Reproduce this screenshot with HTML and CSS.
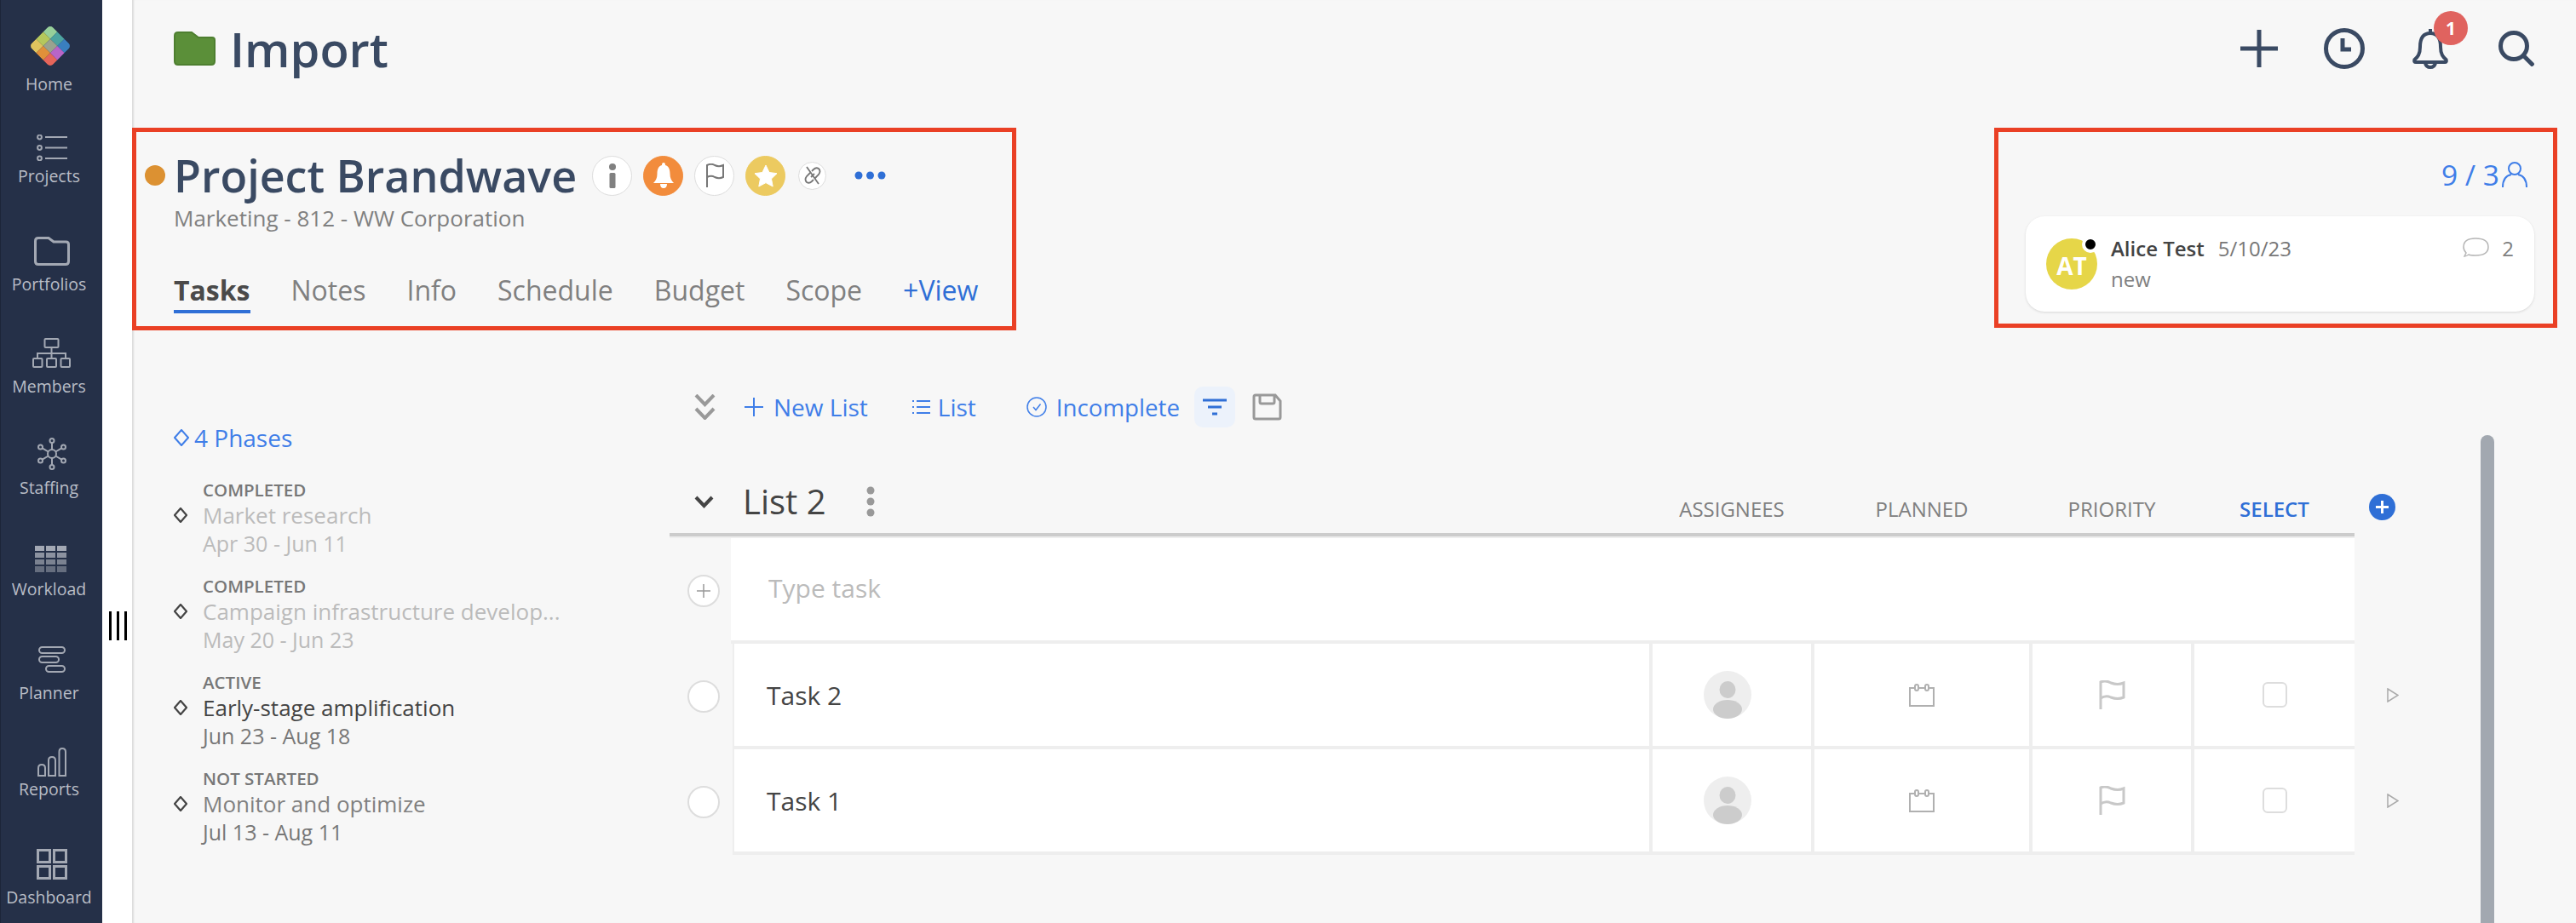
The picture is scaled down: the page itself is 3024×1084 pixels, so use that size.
FILE: index.html
```html
<!DOCTYPE html>
<html lang="en">
<head>
<meta charset="utf-8">
<title>Project Brandwave</title>
<link rel="stylesheet" href="styles.css">
</head>
<body>
<div class="app">
  <nav class="sidebar">
    <a class="nav-item gap-8 nudge">
      <svg width="50" height="50" viewBox="0 0 50 50"><defs><clipPath id="lg"><rect x="-17.7" y="-17.7" width="35.4" height="35.4" rx="5"/></clipPath></defs>
        <g transform="translate(25 25) rotate(45)" clip-path="url(#lg)">
          <rect x="-17.7" y="-17.7" width="11.8" height="11.8" fill="#97cf9a"/><rect x="-5.9" y="-17.7" width="11.8" height="11.8" fill="#4da3a0"/><rect x="5.9" y="-17.7" width="11.8" height="11.8" fill="#3a7fbf"/>
          <rect x="-17.7" y="-5.9" width="11.8" height="11.8" fill="#b5c85c"/><rect x="-5.9" y="-5.9" width="11.8" height="11.8" fill="#9aa38f"/><rect x="5.9" y="-5.9" width="11.8" height="11.8" fill="#b865c8"/>
          <rect x="-17.7" y="5.9" width="11.8" height="11.8" fill="#e0c45e"/><rect x="-5.9" y="5.9" width="11.8" height="11.8" fill="#e0903a"/><rect x="5.9" y="5.9" width="11.8" height="11.8" fill="#e6655a"/>
        </g></svg>
      <span class="nav-label">Home</span>
    </a>
    <a class="nav-item gap-6">
      <svg class="nav-icon" width="36" height="31" viewBox="0 0 36 31"><circle cx="3.5" cy="3" r="2.4"/><circle cx="3.5" cy="15.5" r="2.4"/><circle cx="3.5" cy="28" r="2.4"/><path d="M10 3H36M10 15.5H36M10 28H36"/></svg>
      <span class="nav-label">Projects</span>
    </a>
    <a class="nav-item gap-10">
      <svg class="nav-icon thick" width="42" height="34" viewBox="0 0 42 34"><path d="M1.5 5Q1.5 1.5 5 1.5H17L23 6H37.5Q40.5 6 40.5 9V29Q40.5 32.5 37 32.5H5Q1.5 32.5 1.5 29Z"/></svg>
      <span class="nav-label">Portfolios</span>
    </a>
    <a class="nav-item gap-10">
      <svg class="nav-icon" width="45" height="35" viewBox="0 0 45 35"><rect x="14.5" y="1" width="16" height="10" rx="1"/><rect x="1" y="24" width="10.5" height="10" rx="1"/><rect x="17" y="24" width="11" height="10" rx="1"/><rect x="33.5" y="24" width="10.5" height="10" rx="1"/><path d="M22.5 11V24M6 24V18H39V24"/></svg>
      <span class="nav-label">Members</span>
    </a>
    <a class="nav-item gap-9">
      <svg class="nav-icon" width="34" height="38" viewBox="0 0 34 38"><circle cx="17" cy="19" r="5"/><circle cx="17" cy="3.5" r="2.5"/><circle cx="17" cy="34.5" r="2.5"/><circle cx="3.5" cy="11" r="2.5"/><circle cx="30.5" cy="11" r="2.5"/><circle cx="3.5" cy="27" r="2.5"/><circle cx="30.5" cy="27" r="2.5"/><path d="M17 6V14M17 24V32M5.7 12.3L12.7 16.5M28.3 12.3L21.3 16.5M5.7 25.7L12.7 21.5M28.3 25.7L21.3 21.5"/></svg>
      <span class="nav-label">Staffing</span>
    </a>
    <a class="nav-item gap-8 nudge">
      <svg width="37" height="31" viewBox="0 0 37 31">
        <g fill="#a3a8b4"><rect width="11" height="6"/><rect x="13" width="11" height="6"/><rect x="26" width="11" height="6"/></g>
        <g fill="#8c92a0"><rect y="8" width="11" height="6"/><rect x="13" y="8" width="11" height="6"/><rect x="26" y="8" width="11" height="6"/></g>
        <g fill="#7b8291"><rect y="16" width="11" height="6"/><rect x="13" y="16" width="11" height="6"/><rect x="26" y="16" width="11" height="6"/></g>
        <g fill="#666e7f"><rect y="24" width="11" height="7"/><rect x="13" y="24" width="11" height="7"/><rect x="26" y="24" width="11" height="7"/></g></svg>
      <span class="nav-label">Workload</span>
    </a>
    <a class="nav-item gap-12">
      <svg class="nav-icon" width="32" height="31" viewBox="0 0 32 31"><rect x="1" y="1" width="30" height="7" rx="3.5"/><rect x="1" y="12" width="23" height="7" rx="3.5"/><rect x="9" y="23" width="22" height="7" rx="3.5"/></svg>
      <span class="nav-label">Planner</span>
    </a>
    <a class="nav-item gap-3">
      <svg class="nav-icon" width="34" height="34" viewBox="0 0 34 34"><path d="M1 33V24Q1 20 5 20Q9 20 9 24V33ZM13 33V15Q13 11 17 11Q21 11 21 15V33ZM25.5 33V5Q25.5 1 29 1Q33 1 33 5V33Z"/></svg>
      <span class="nav-label">Reports</span>
    </a>
    <a class="nav-item gap-9">
      <svg class="nav-icon thick" width="36" height="36" viewBox="0 0 36 36"><rect x="1.5" y="1.5" width="14" height="14"/><rect x="20.5" y="1.5" width="14" height="14"/><rect x="1.5" y="20.5" width="14" height="14"/><rect x="20.5" y="20.5" width="14" height="14"/></svg>
      <span class="nav-label">Dashboard</span>
    </a>
  </nav>

  <div class="gutter"><div class="grip"><i></i><i></i><i></i></div></div>

  <main class="main">
    <header class="topbar">
      <div class="crumb">
        <svg width="49" height="40" viewBox="0 0 49 40"><path d="M1 5Q1 1 5 1H21L29 7H45Q48 7 48 10V35Q48 39 44 39H5Q1 39 1 35Z" fill="#5b8f39" stroke="#4e7f30" stroke-width="2"/></svg>
        <h1 class="crumb-title">Import</h1>
      </div>
      <div class="top-actions">
        <svg class="top-icon" width="44" height="44" viewBox="0 0 44 44"><path d="M22 0V44M0 22H44"/></svg>
        <svg class="top-icon" width="48" height="48" viewBox="0 0 48 48"><circle cx="24" cy="24" r="21.5"/><path d="M22 12V25H32"/></svg>
        <div class="bell-wrap">
          <svg class="top-icon thin" width="42" height="48" viewBox="0 0 42 48"><path d="M21 1V6M21 6C11 6 9 14 9 22C9 31 6 34 2.500 37Q1.500 40 4 40H38Q40.500 40 39.500 37C36 34 33 31 33 22C33 14 31 6 21 6ZM15 41Q16 46 21 46Q26 46 27 41"/></svg>
          <span class="badge">1</span>
        </div>
        <svg class="top-icon" width="42" height="42" viewBox="0 0 42 42"><circle cx="18" cy="18" r="15.500"/><path d="M29 29L41 41"/></svg>
      </div>
    </header>

    <section class="project-row">
      <div class="red-box project-box">
        <div class="title-row">
          <span class="status-dot"></span>
          <h2 class="project-title">Project Brandwave</h2>
          <div class="title-actions">
            <span class="round"><svg width="14" height="30" viewBox="0 0 14 30"><circle cx="7" cy="5" r="4" fill="#808080"/><rect x="3.500" y="12" width="7" height="18" rx="1.500" fill="#808080"/></svg></span>
            <span class="round round-orange"><svg width="24" height="30" viewBox="0 0 24 30"><path d="M12 0C13.500 0 14 1 14 3C18 4 19.500 8 19.500 13C19.500 18 21 21 24 24H0C3 21 4.500 18 4.500 13C4.500 8 6 4 10 3C10 1 10.500 0 12 0ZM8 25H16Q16 30 12 30Q8 30 8 25Z" fill="#fff"/></svg></span>
            <span class="round"><svg width="24" height="28" viewBox="0 0 24 28" fill="none" stroke="#777" stroke-width="2"><path d="M3 28V2Q8 -0.500 12 2Q17 4.500 22 2V16Q17 18.500 12 16Q8 13.500 3 16"/></svg></span>
            <span class="round round-yellow"><svg width="28" height="27" viewBox="0 0 28 27"><path d="M14 1L18 9.500L27 10.700L20.500 17L22.200 26L14 21.600L5.800 26L7.500 17L1 10.700L10 9.500Z" fill="#fff" stroke="#fff" stroke-linejoin="round"/></svg></span>
            <span class="round round-small"><svg width="20" height="22" viewBox="0 0 20 22" fill="none" stroke="#777" stroke-width="1.800"><path d="M7 8L3 12Q0 16 3 19Q6 21 9 18L11 16M13 14L17 10Q20 6 17 3Q14 1 11 4L9 6M8 13L12 9M3 1L17 21"/></svg></span>
            <svg class="more" width="37" height="10" viewBox="0 0 37 10"><circle cx="5" cy="5" r="4.500"/><circle cx="18.500" cy="5" r="4.500"/><circle cx="32" cy="5" r="4.500"/></svg>
          </div>
        </div>
        <p class="project-sub">Marketing - 812 - WW Corporation</p>
        <div class="tabs">
          <span class="tab tab-active">Tasks</span>
          <span class="tab">Notes</span>
          <span class="tab">Info</span>
          <span class="tab">Schedule</span>
          <span class="tab">Budget</span>
          <span class="tab">Scope</span>
          <span class="tab tab-add">+View</span>
        </div>
      </div>

      <div class="red-box activity-box">
        <div class="count">
          <span>9 / 3</span>
          <svg width="30" height="30" viewBox="0 0 30 30" fill="none" stroke="#3f7ee8" stroke-width="2"><circle cx="15" cy="8" r="7"/><path d="M1 30Q1 17 11 15M29 30Q29 17 19 15"/></svg>
        </div>
        <div class="note-card">
          <div class="avatar">AT<span class="presence"></span></div>
          <div class="note-body">
            <div class="note-head">
              <span class="note-name">Alice Test</span>
              <span class="note-date">5/10/23</span>
              <svg class="note-bubble" width="31" height="24" viewBox="0 0 31 24" fill="none" stroke="#b5b5b5" stroke-width="1.500"><path d="M2 22L4 18Q1 15 1 11Q1 1 15 1Q30 1 30 11Q30 21 15 21Q9 21 7 20Q4 22 2 22Z"/></svg>
              <span class="note-count">2</span>
            </div>
            <div class="note-text">new</div>
          </div>
        </div>
      </div>
    </section>

    <section class="content">
      <aside class="phases">
        <div class="phases-title">
          <svg width="18" height="20" viewBox="0 0 18 20" fill="none" stroke="#3f7ee8" stroke-width="2"><path d="M9 1L17 10L9 19L1 10Z" stroke-linejoin="round"/></svg>
          <span>4 Phases</span>
        </div>
        <div class="phase phase-done">
          <svg class="phase-mark" width="16" height="18" viewBox="0 0 16 18"><path d="M8 1L15 9L8 17L1 9Z"/></svg>
          <span class="phase-status">COMPLETED</span>
          <span class="phase-name">Market research</span>
          <span class="phase-date">Apr 30 - Jun 11</span>
        </div>
        <div class="phase phase-done">
          <svg class="phase-mark" width="16" height="18" viewBox="0 0 16 18"><path d="M8 1L15 9L8 17L1 9Z"/></svg>
          <span class="phase-status">COMPLETED</span>
          <span class="phase-name">Campaign infrastructure develop...</span>
          <span class="phase-date">May 20 - Jun 23</span>
        </div>
        <div class="phase phase-active">
          <svg class="phase-mark" width="16" height="18" viewBox="0 0 16 18"><path d="M8 1L15 9L8 17L1 9Z"/></svg>
          <span class="phase-status">ACTIVE</span>
          <span class="phase-name">Early-stage amplification</span>
          <span class="phase-date">Jun 23 - Aug 18</span>
        </div>
        <div class="phase phase-next">
          <svg class="phase-mark" width="16" height="18" viewBox="0 0 16 18"><path d="M8 1L15 9L8 17L1 9Z"/></svg>
          <span class="phase-status">NOT STARTED</span>
          <span class="phase-name">Monitor and optimize</span>
          <span class="phase-date">Jul 13 - Aug 11</span>
        </div>
      </aside>

      <div class="tasks">
        <div class="toolbar">
          <svg class="tool-chev" width="25" height="30" viewBox="0 0 25 30" fill="none" stroke="#999" stroke-width="4"><path d="M2 1L12.500 12L23 1M2 17L12.500 28L23 17"/></svg>
          <span class="tool tool-new"><svg width="22" height="22" viewBox="0 0 22 22" stroke="#3f7ee8" stroke-width="2"><path d="M11 0V22M0 11H22"/></svg>New List</span>
          <span class="tool tool-list"><svg width="21" height="18" viewBox="0 0 21 18" stroke="#3f7ee8" stroke-width="2"><path d="M5 2H21M5 9H21M5 16H21M0 2H2M0 9H2M0 16H2"/></svg>List</span>
          <span class="tool tool-inc"><svg width="24" height="24" viewBox="0 0 24 24" fill="none" stroke="#3f7ee8" stroke-width="1.500"><circle cx="12" cy="12" r="11"/><path d="M8 12L11 15.500L16.500 8.500"/></svg>Incomplete</span>
          <span class="filter-btn"><svg width="28" height="20" viewBox="0 0 28 20" stroke="#2f6fd6" stroke-width="3"><path d="M0 2H28M6 10H22M11 18H17"/></svg></span>
          <svg class="tool-save" width="35" height="32" viewBox="0 0 35 32" fill="none" stroke="#999" stroke-width="3"><path d="M2 4Q2 2 4 2H27L33 9V28Q33 30 31 30H4Q2 30 2 28ZM9 2V10Q9 12 11 12H24Q26 12 26 10V2"/></svg>
        </div>

        <div class="list-head">
          <div class="list-name">
            <svg width="23" height="15" viewBox="0 0 23 15" fill="none" stroke="#444" stroke-width="4"><path d="M2 2L11.500 12L21 2"/></svg>
            <span>List 2</span>
            <svg class="kebab" width="10" height="36" viewBox="0 0 10 36" fill="#999"><circle cx="5" cy="5" r="4.500"/><circle cx="5" cy="18" r="4.500"/><circle cx="5" cy="31" r="4.500"/></svg>
          </div>
          <div class="col-heads">
            <span></span>
            <span>ASSIGNEES</span>
            <span>PLANNED</span>
            <span>PRIORITY</span>
            <span class="col-select">SELECT</span>
          </div>
          <svg class="col-add" width="31" height="31" viewBox="0 0 31 31"><circle cx="15.500" cy="15.500" r="15.500" fill="#2f6fd6"/><path d="M15.500 8V23M8 15.500H23" stroke="#fff" stroke-width="3"/></svg>
        </div>

        <div class="list-rule"></div>

        <div class="new-row">
          <span class="circle"><svg width="16" height="16" viewBox="0 0 16 16" stroke="#999" stroke-width="1.500"><path d="M8 0V16M0 8H16"/></svg></span>
          <div class="new-cell">Type task</div>
        </div>

        <div class="task-row">
          <span class="circle"></span>
          <div class="cells">
            <div class="cell cell-name">Task 2</div>
            <div class="cell"><svg class="assignee" width="56" height="56" viewBox="0 0 56 56"><circle cx="28" cy="28" r="28" fill="#eee"/><ellipse cx="28" cy="22" rx="9.500" ry="10" fill="#ccc"/><ellipse cx="28" cy="45" rx="17" ry="11" fill="#ccc"/></svg></div>
            <div class="cell"><svg width="30" height="27" viewBox="0 0 30 27" fill="none" stroke="#b0b0b0" stroke-width="2"><path d="M1 5H29V26H1Z"/><rect x="7" y="1" width="4" height="7" rx="2" fill="#fff"/><rect x="19" y="1" width="4" height="7" rx="2" fill="#fff"/></svg></div>
            <div class="cell"><svg width="31" height="34" viewBox="0 0 31 34" fill="none" stroke="#c8c8c8" stroke-width="3"><path d="M2 34V2Q8 -0.500 14 3Q22 6 29 3V20Q22 23 14 20Q8 17 2 21"/></svg></div>
            <div class="cell"><span class="checkbox"></span></div>
          </div>
          <svg class="row-arrow" width="14" height="17" viewBox="0 0 14 17" fill="none" stroke="#aaa" stroke-width="1.500"><path d="M1 1L13 8.500L1 16Z"/></svg>
        </div>

        <div class="task-row">
          <span class="circle"></span>
          <div class="cells">
            <div class="cell cell-name">Task 1</div>
            <div class="cell"><svg class="assignee" width="56" height="56" viewBox="0 0 56 56"><circle cx="28" cy="28" r="28" fill="#eee"/><ellipse cx="28" cy="22" rx="9.500" ry="10" fill="#ccc"/><ellipse cx="28" cy="45" rx="17" ry="11" fill="#ccc"/></svg></div>
            <div class="cell"><svg width="30" height="27" viewBox="0 0 30 27" fill="none" stroke="#b0b0b0" stroke-width="2"><path d="M1 5H29V26H1Z"/><rect x="7" y="1" width="4" height="7" rx="2" fill="#fff"/><rect x="19" y="1" width="4" height="7" rx="2" fill="#fff"/></svg></div>
            <div class="cell"><svg width="31" height="34" viewBox="0 0 31 34" fill="none" stroke="#c8c8c8" stroke-width="3"><path d="M2 34V2Q8 -0.500 14 3Q22 6 29 3V20Q22 23 14 20Q8 17 2 21"/></svg></div>
            <div class="cell"><span class="checkbox"></span></div>
          </div>
          <svg class="row-arrow" width="14" height="17" viewBox="0 0 14 17" fill="none" stroke="#aaa" stroke-width="1.500"><path d="M1 1L13 8.500L1 16Z"/></svg>
        </div>
      </div>

      <div class="scrollbar"></div>
    </section>
  </main>
</div>
</body>
</html>
```
FILE: styles.css
```css
* { box-sizing: border-box; }
html, body { margin: 0; height: 100%; }
body { background: #fff; font-family: "Open Sans", "Liberation Sans", sans-serif; color: #444; overflow: hidden; }
h1, h2, p { margin: 0; font-weight: inherit; }
svg { display: block; flex: none; }

.app { display: flex; width: 3024px; height: 1084px; overflow: hidden; }

/* sidebar */
.sidebar { width: 120px; flex: none; background: #253048; border-left: 1px solid #1c2539; display: grid; grid-template-rows: 111px 108px 127px 120px 119px 119px 122px 113px 127px; }
.nav-item { display: flex; flex-direction: column; align-items: center; justify-content: flex-end; }
.nav-label { font-size: 19.500px; line-height: 24px; color: #b9bdc6; margin-left: -6px; white-space: nowrap; }
.nav-icon { fill: none; stroke: #a3a8b3; stroke-width: 2; }
.nav-icon.thick { stroke-width: 3; }
.nudge svg { margin-right: 3px; }
.gap-3 svg { margin-bottom: 3px; }
.gap-6 svg { margin-bottom: 6px; }
.gap-8 svg { margin-bottom: 8px; }
.gap-9 svg { margin-bottom: 9px; }
.gap-10 svg { margin-bottom: 10px; }
.gap-12 svg { margin-bottom: 12px; }

/* resize grip */
.gutter { width: 35px; flex: none; padding: 718px 0 0 8px; }
.grip { display: flex; gap: 6px; height: 34px; }
.grip i { width: 3px; background: #000; }

/* main */
.main { flex: 1; min-width: 0; background: #f7f7f7; box-shadow: inset 3px 0 2px -1px #dcdcdc; display: flex; flex-direction: column; }

.topbar { height: 150px; flex: none; padding: 0 49px 36px 49px; display: flex; align-items: center; justify-content: space-between; }
.crumb { display: flex; align-items: center; gap: 17px; }
.crumb-title { font-size: 56px; line-height: 60px; font-weight: 600; color: #3a4a63; }
.top-actions { display: flex; align-items: center; }
.top-icon { fill: none; stroke: #3a4a63; stroke-width: 5; }
.top-icon.thin { stroke-width: 4; }
.top-actions > * + * { margin-left: 54px; }
.top-actions > .bell-wrap { margin-left: 56px; }
.top-actions > svg:last-child { margin-left: 59px; }
.bell-wrap { position: relative; }
.badge { position: absolute; left: 25px; top: -20px; width: 40px; height: 40px; border-radius: 50%; background: #e0635f; color: #fff; font-size: 21px; font-weight: 700; line-height: 40px; text-align: center; }

.project-row { height: 238px; flex: none; display: flex; justify-content: space-between; align-items: flex-start; padding-right: 22px; }
.red-box { border: 5px solid #ea4025; }
.project-box { width: 1038px; height: 238px; padding: 23px 0 0 10px; }
.title-row { display: flex; align-items: center; height: 56px; }
.status-dot { width: 24px; height: 24px; border-radius: 50%; background: #dc9132; flex: none; }
.project-title { font-size: 52px; line-height: 56px; font-weight: 600; color: #3a4a63; margin-left: 10px; white-space: nowrap; }
.title-actions { display: flex; align-items: center; gap: 13px; margin-left: 18px; }
.round { width: 47px; height: 47px; border-radius: 50%; background: #fff; border: 1px solid #ddd; display: flex; align-items: center; justify-content: center; flex: none; }
.round-orange { background: #f28c3c; border-color: #f28c3c; }
.round-yellow { background: #ecca60; border-color: #ecca60; }
.round-small { width: 33px; height: 33px; margin-left: 2px; }
.more { fill: #2f6fd6; margin-left: 20px; }
.project-sub { font-size: 26px; line-height: 34px; color: #808080; margin: 5px 0 0 34px; }
.tabs { display: flex; gap: 48px; margin: 46px 0 0 34px; }
.tab { font-size: 32px; line-height: 44px; color: #808080; padding-bottom: 1px; border-bottom: 4px solid transparent; }
.tab-active { color: #4a4a4a; font-weight: 700; border-bottom-color: #2f6fd6; }
.tab-add { color: #2f6fd6; }

.activity-box { width: 661px; height: 235px; padding: 0 30px 0 32px; display: flex; flex-direction: column; }
.count { display: flex; align-items: center; justify-content: flex-end; gap: 3px; height: 30px; margin: 35px 0 0; font-size: 33.500px; color: #3f7ee8; }
.note-card { width: 597px; height: 112px; margin-top: 34px; background: #fff; border-radius: 22px; box-shadow: 0 1px 3px rgba(0,0,0,.13); display: flex; padding: 26px 24px 0 24px; }
.avatar { position: relative; width: 60px; height: 60px; border-radius: 50%; background: #e6d648; color: #fff; font-size: 28px; font-weight: 700; line-height: 64px; text-align: center; flex: none; }
.presence { position: absolute; right: -2px; top: -3px; width: 20px; height: 20px; border-radius: 50%; background: #000; border: 4px solid #fff; }
.note-body { flex: 1; margin-left: 16px; margin-top: -5px; }
.note-head { display: flex; align-items: center; height: 32px; }
.note-name { font-size: 24px; font-weight: 600; color: #444; }
.note-date { font-size: 24px; color: #777; margin-left: 16px; }
.note-bubble { margin-left: auto; }
.note-count { font-size: 24px; color: #808080; margin-left: 15px; }
.note-text { font-size: 24px; line-height: 32px; color: #808080; margin-top: 5px; }

/* content */
.content { flex: 1; min-height: 0; display: flex; }
.phases { width: 631px; flex: none; padding: 108px 0 0 49px; }
.phases-title { display: flex; align-items: center; gap: 6px; height: 36px; margin-bottom: 30px; font-size: 28px; color: #3f7ee8; }
.phase { display: grid; grid-template-columns: 34px 1fr; grid-template-rows: 26px 34px 31px; margin-bottom: 22px; }
.phase-mark { grid-column: 1; grid-row: 2; align-self: center; fill: none; stroke: #444; stroke-width: 2.200; stroke-linejoin: round; }
.phase-status { grid-column: 2; grid-row: 1; font-size: 20.500px; line-height: 26px; font-weight: 600; color: #777; }
.phase-name { grid-column: 2; grid-row: 2; font-size: 26px; line-height: 34px; white-space: nowrap; }
.phase-date { grid-column: 2; grid-row: 3; font-size: 25px; line-height: 32px; color: #777; }
.phase-done .phase-name, .phase-done .phase-date { color: #bbb; }
.phase-active .phase-name { color: #444; }
.phase-next .phase-name { color: #808080; }

.tasks { width: 2044px; flex: none; padding-top: 66px; }
.toolbar { display: flex; align-items: center; height: 48px; font-size: 28px; color: #3f7ee8; }
.tool { display: flex; align-items: center; white-space: nowrap; }
.tool-chev { margin-left: 29px; }
.tool-new { margin-left: 34px; gap: 12px; }
.tool-list { margin-left: 52px; gap: 9px; }
.tool-inc { margin-left: 59px; gap: 11px; font-size: 27.700px; }
.filter-btn { width: 48px; height: 48px; border-radius: 10px; background: #ecf2fb; margin-left: 17px; display: flex; align-items: center; justify-content: center; }
.tool-save { margin-left: 20px; }

.list-head { height: 124px; position: relative; display: flex; align-items: flex-end; }
.list-name { position: absolute; left: 29px; bottom: 10px; display: flex; align-items: center; font-size: 40px; line-height: 54px; color: #444; }
.list-name span { margin-left: 34px; }
.kebab { margin-left: 47px; }
.col-heads { width: 1978px; display: grid; grid-template-columns: 1150px 186px 252px 186px 188px; column-gap: 4px; font-size: 24px; font-weight: 500; line-height: 30px; color: #808080; text-align: center; padding-bottom: 13px; }
.col-select { color: #2f6fd6; font-weight: 600; }
.col-add { margin: 0 0 15px 17px; }

.list-rule { width: 1978px; height: 6px; background: #ccc; border-bottom: 2px solid #eee; }

.new-row, .task-row { display: flex; align-items: center; }
.circle { width: 38px; height: 38px; border-radius: 50%; border: 2px solid #ddd; background: #fff; margin: 0 15px 0 21px; display: flex; align-items: center; justify-content: center; flex: none; }
.new-cell { width: 1906px; height: 124px; margin-left: -2px; border-bottom: 4px solid #eee; background: #fff; padding: 0 0 4px 44px; display: flex; align-items: center; font-size: 30px; color: #bbb; }

.cells { width: 1904px; height: 124px; display: grid; grid-template-columns: 1076px 186px 252px 186px 188px; column-gap: 4px; background: #eee; border-bottom: 4px solid #eee; }
.cell { background: #fff; display: flex; align-items: center; justify-content: center; }
.cell-name { justify-content: flex-start; padding-left: 38px; font-size: 30px; color: #444; border-left: 2px solid #eee; }
.assignee { margin-right: 10px; }
.checkbox { width: 29px; height: 30px; border: 2px solid #ddd; border-radius: 6px; }
.row-arrow { margin: -4px 0 0 38px; }

.scrollbar { width: 16px; flex: none; margin: 123px 0 0 82px; background: #a2a8b0; border-radius: 8px 8px 0 0; }
```
